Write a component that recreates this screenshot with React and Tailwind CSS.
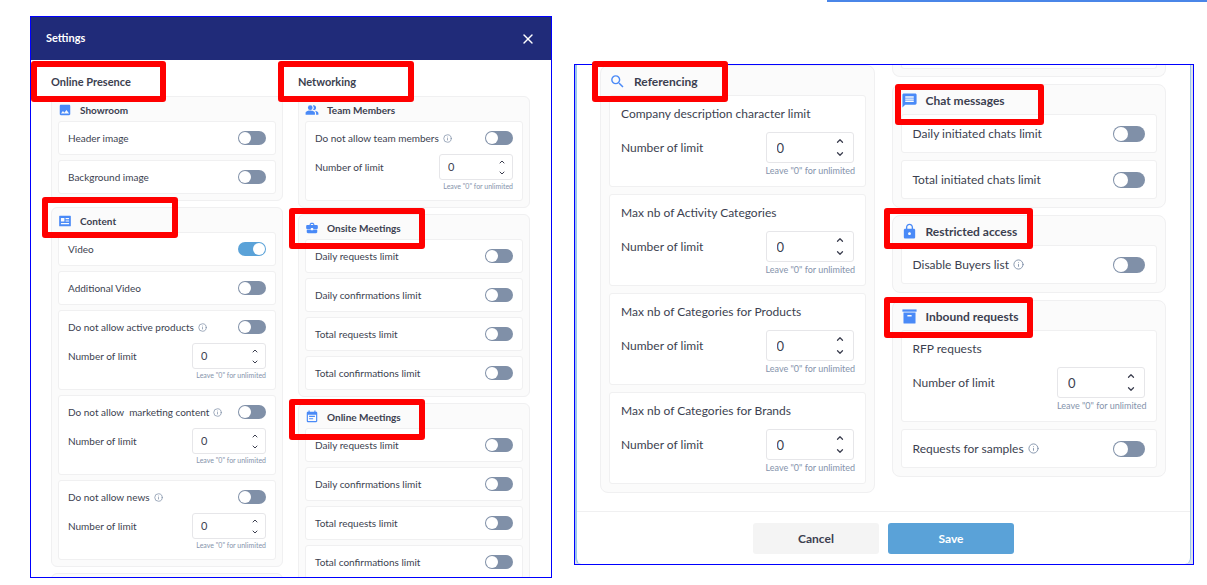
import React, { useId, useState } from 'react';
import clsx from 'clsx';
import { ChevronDown, ChevronUp, Info, X } from 'lucide-react';
import {
  MdBusinessCenter,
  MdEventNote,
  MdImage,
  MdLock,
  MdMessage,
  MdPeopleAlt,
  MdSearch,
} from 'react-icons/md';

const sizes = {
  sm: {
    text: 'text-[10px] leading-4',
    section: 'rounded-md pb-1.5 px-1.5',
    heading: 'h-6 gap-2 pt-0.5 text-[10px]',
    icon: 'size-3.5',
    rows: 'gap-[5px]',
    row: 'h-[34px] px-[9px]',
    limitRow: 'h-20 px-[9px]',
    limitTop: 'h-8',
    toggle: 'w-7 h-3.5 before:size-3',
    input: 'w-[74px] h-[26px] pl-2 pr-1.5 text-[11px]',
    hint: 'text-[7px] leading-3 w-[74px]',
    chevron: 'size-2',
    info: 'size-[9px]',
  },
  lg: {
    text: 'text-xs leading-5',
    section: 'rounded-lg pb-2 px-2',
    heading: 'h-[29px] gap-2 pt-0.5 text-xs',
    icon: 'size-[17px]',
    rows: 'gap-[7px]',
    row: 'h-[39px] px-[11px]',
    limitRow: 'h-[92px] px-[11px]',
    limitTop: 'h-9',
    toggle: 'w-8 h-4 before:size-3.5',
    input: 'w-[88px] h-[31px] pl-2.5 pr-2 text-[13px]',
    hint: 'text-[9px] leading-4 w-[88px]',
    chevron: 'size-2.5',
    info: 'size-[11px]',
  },
};

const ContentIcon = ({ className }) => (
  <svg viewBox="0 0 24 24" className={className} fill="currentColor">
    <path
      fillRule="evenodd"
      d="M3 3h18a1 1 0 0 1 1 1v16a1 1 0 0 1-1 1H3a1 1 0 0 1-1-1V4a1 1 0 0 1 1-1Zm2 4v6h6V7H5Zm8 0v2h6V7h-6Zm0 4v2h6v-2h-6ZM5 15.500v2h14v-2H5Z"
    />
  </svg>
);

const ArchiveIcon = ({ className }) => (
  <svg viewBox="0 0 24 24" className={className} fill="currentColor">
    <path d="M2 2h20v3.200H2z" />
    <path fillRule="evenodd" d="M3.500 6.500h17V21a1 1 0 0 1-1 1h-15a1 1 0 0 1-1-1V6.500ZM9 10v2h6v-2H9Z" />
  </svg>
);

// Red frame around a heading
const Mark = ({ className }) => (
  <span
    aria-hidden="true"
    className={clsx('absolute z-10 h-[41px] rounded-[3px] border-[#ff0000] pointer-events-none', className)}
  />
);

const Toggle = ({ id, size, defaultChecked }) => {
  const [checked, setChecked] = useState(Boolean(defaultChecked));

  return (
    <input
      id={id}
      type="checkbox"
      role="switch"
      checked={checked}
      onChange={() => setChecked(!checked)}
      className={clsx(
        'appearance-none shrink-0 flex items-center rounded-full px-px bg-[#8090a8] checked:bg-[#5aa2d8] checked:justify-end before:rounded-full before:bg-white',
        sizes[size].toggle
      )}
    />
  );
};

const RowLabel = ({ id, size, label, info }) => (
  <label htmlFor={id} className="flex items-center gap-1 whitespace-pre">
    {label}
    {info && <Info className={clsx('text-[#8090a8]', sizes[size].info)} strokeWidth={2} />}
  </label>
);

const NumberField = ({ size }) => {
  const id = useId();
  const [value, setValue] = useState(0);
  const s = sizes[size];

  return (
    <div className="flex justify-between">
      <label htmlFor={id} className={clsx('flex items-center', size === 'sm' ? 'h-[26px]' : 'h-[31px]')}>
        Number of limit
      </label>
      <div>
        <div className={clsx('flex items-center rounded-[3px] border border-[#e6e6e9] bg-white', s.input)}>
          <input
            id={id}
            type="text"
            inputMode="numeric"
            value={value}
            onChange={(e) => setValue(Number(e.target.value) || 0)}
            className="min-w-0 flex-1 outline-none"
          />
          <div className="flex flex-col gap-[3px]">
            <button type="button" aria-label="Increase" onClick={() => setValue(value + 1)}>
              <ChevronUp className={s.chevron} strokeWidth={3} />
            </button>
            <button type="button" aria-label="Decrease" onClick={() => setValue(Math.max(0, value - 1))}>
              <ChevronDown className={s.chevron} strokeWidth={3} />
            </button>
          </div>
        </div>
        <p className={clsx('text-right whitespace-nowrap text-[#8593ab]', s.hint)}>Leave "0" for unlimited</p>
      </div>
    </div>
  );
};

const Row = ({ size, label, info, limit, toggle = true, on }) => {
  const id = useId();
  const s = sizes[size];
  const box = 'rounded-[3px] border border-[#f0f0f1] bg-white';

  if (!limit) {
    return (
      <div className={clsx('flex items-center justify-between', box, s.row)}>
        <RowLabel id={id} size={size} label={label} info={info} />
        <Toggle id={id} size={size} defaultChecked={on} />
      </div>
    );
  }

  return (
    <div className={clsx(box, s.limitRow)}>
      <div className={clsx('flex items-center justify-between', s.limitTop)}>
        {toggle ? (
          <>
            <RowLabel id={id} size={size} label={label} info={info} />
            <Toggle id={id} size={size} defaultChecked={on} />
          </>
        ) : (
          <p>{label}</p>
        )}
      </div>
      <NumberField size={size} />
    </div>
  );
};

const Section = ({ size, icon: Icon, title, rows, mark }) => {
  const s = sizes[size];

  return (
    <section className={clsx('border border-[#f0f0f1] bg-[#fbfbfb]', s.text, s.section)}>
      <h3 className={clsx('relative flex items-center font-bold', s.heading)}>
        <Icon className={clsx('shrink-0 text-[#4a8af7]', s.icon)} />
        {title}
        {mark && <Mark className={mark} />}
      </h3>
      <div className={clsx('flex flex-col', s.rows)}>
        {rows.map((row) => (
          <Row key={row.label} size={size} {...row} />
        ))}
      </div>
    </section>
  );
};

const meetingRows = [
  { label: 'Daily requests limit' },
  { label: 'Daily confirmations limit' },
  { label: 'Total requests limit' },
  { label: 'Total confirmations limit' },
];

const presence = [
  {
    title: 'Showroom',
    icon: MdImage,
    rows: [{ label: 'Header image' }, { label: 'Background image' }],
  },
  {
    title: 'Content',
    icon: ContentIcon,
    mark: '-left-4 -top-[11px] w-[136px] border-[6px]',
    rows: [
      { label: 'Video', on: true },
      { label: 'Additional Video' },
      { label: 'Do not allow active products', info: true, limit: true },
      { label: 'Do not allow  marketing content', info: true, limit: true },
      { label: 'Do not allow news', info: true, limit: true },
    ],
  },
];

const networking = [
  {
    title: 'Team Members',
    icon: MdPeopleAlt,
    rows: [{ label: 'Do not allow team members', info: true, limit: true }],
  },
  {
    title: 'Onsite Meetings',
    icon: MdBusinessCenter,
    mark: '-left-4 -top-[7px] w-[136px] border-[6px]',
    rows: meetingRows,
  },
  {
    title: 'Online Meetings',
    icon: MdEventNote,
    mark: '-left-4 -top-[5px] w-[136px] border-[6px]',
    rows: meetingRows,
  },
];

const referencing = {
  title: 'Referencing',
  icon: MdSearch,
  mark: '-left-[17px] -top-[5px] w-[136px] border-[6px]',
  rows: [
    { label: 'Company description character limit', limit: true, toggle: false },
    { label: 'Max nb of Activity Categories', limit: true, toggle: false },
    { label: 'Max nb of Categories for Products', limit: true, toggle: false },
    { label: 'Max nb of Categories for Brands', limit: true, toggle: false },
  ],
};

const access = [
  {
    title: 'Chat messages',
    icon: MdMessage,
    mark: '-left-1.5 -top-px w-[149px] border-[6px]',
    rows: [{ label: 'Daily initiated chats limit' }, { label: 'Total initiated chats limit' }],
  },
  {
    title: 'Restricted access',
    icon: MdLock,
    mark: '-left-[17px] -top-2 w-[149px] border-[6px]',
    rows: [{ label: 'Disable Buyers list', info: true }],
  },
  {
    title: 'Inbound requests',
    icon: ArchiveIcon,
    mark: '-left-[17px] -top-1 w-[149px] border-[6px]',
    rows: [
      { label: 'RFP requests', limit: true, toggle: false },
      { label: 'Requests for samples', info: true },
    ],
  },
];

const Column = ({ title, sections, mark }) => (
  <div className="flex min-w-0 flex-col gap-1.5">
    <h2 className="relative -mb-1.5 flex h-9 items-center pt-2 text-[11px] font-bold">
      {title}
      <Mark className={mark} />
    </h2>
    {sections.map((section) => (
      <Section key={section.title} size="sm" {...section} />
    ))}
    <div className="h-10 shrink-0 rounded-md border border-[#f0f0f1] bg-[#fbfbfb]" />
  </div>
);

const SettingsPanel = () => (
  <div className="mt-3.5 flex h-[562px] flex-col overflow-hidden border border-[#0000ff] bg-white">
    <header className="flex h-[43px] shrink-0 items-center justify-between bg-[#202b79] px-[15px] text-white">
      <h1 className="text-[11px] font-bold">Settings</h1>
      <button type="button" aria-label="Close">
        <X className="size-4" strokeWidth={2} />
      </button>
    </header>
    <div className="grid grid-cols-2 gap-[15px] pl-5 pr-[21px]">
      <Column title="Online Presence" sections={presence} mark="-left-5 top-px w-[135px] border-[6px]" />
      <Column title="Networking" sections={networking} mark="-left-5 top-px w-[136px] border-[6px]" />
    </div>
  </div>
);

const LimitsPanel = () => (
  <div className="mt-[62px] border border-[#0000ff] bg-[#dfe3ea] pr-0.5">
    <div className="rounded-b-md border-l-2 border-r border-[#9cc6ea] bg-white">
      <div className="grid grid-cols-2 items-start gap-[17px] pb-[18px] pl-[23px] pr-6">
        <Section size="lg" {...referencing} />
        <div className="flex flex-col gap-[7px]">
          {/* End of the section scrolled out of view */}
          <div className="h-3 rounded-b-lg border border-t-0 border-[#f0f0f1] bg-[#fbfbfb] px-2">
            <div className="h-1 rounded-b-[3px] border border-t-0 border-[#f0f0f1] bg-white" />
          </div>
          {access.map((section) => (
            <Section key={section.title} size="lg" {...section} />
          ))}
        </div>
      </div>
      <footer className="flex justify-center gap-[9px] border-t border-[#f0f0f1] pb-2.5 pt-[11px] text-xs font-bold">
        <button type="button" className="h-[31px] w-[126px] rounded-[3px] bg-[#f4f4f4]">
          Cancel
        </button>
        <button type="button" className="h-[31px] w-[126px] rounded-[3px] bg-[#5aa2d8] text-white">
          Save
        </button>
      </footer>
    </div>
  </div>
);

const App = () => (
  <div className="bg-white font-['Lato',sans-serif] text-[#3c3f50]">
    <div className="ml-[827px] h-0.5 bg-[#4a86e8]" />
    <main className="grid grid-cols-[522fr_620fr] items-start gap-[22px] pl-[30px] pr-[13px]">
      <SettingsPanel />
      <LimitsPanel />
    </main>
  </div>
);

export default App;
